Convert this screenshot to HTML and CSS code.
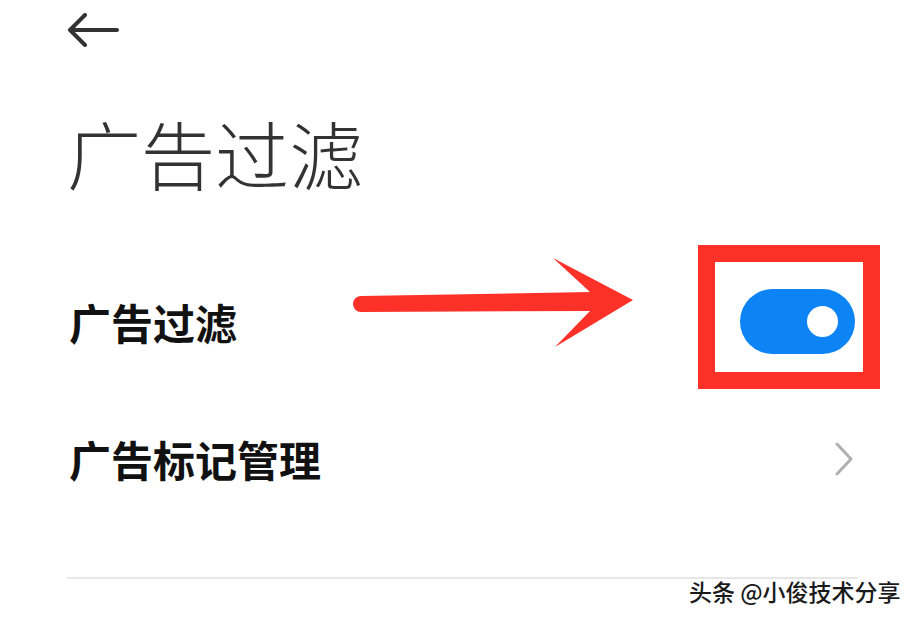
FILE: index.html
```html
<!DOCTYPE html>
<html lang="zh-CN">
<head>
<meta charset="utf-8">
<title>广告过滤</title>
<link rel="stylesheet" href="styles.css">
</head>
<body>
<div class="page">
  <header class="topbar">
    <svg class="back" width="52" height="34" viewBox="0 0 52 34">
      <path d="M18 2 L3 17 L18 32 M3 17 H50" fill="none" stroke="#333" stroke-width="4" stroke-linecap="round" stroke-linejoin="round"/>
    </svg>
  </header>
  <h1 class="title">广告过滤</h1>
  <div class="list">
    <div class="row">
      <span class="label">广告过滤</span>
      <span class="switch"><span class="knob"></span></span>
    </div>
    <div class="row">
      <span class="label">广告标记管理</span>
      <svg class="chev" width="20" height="34" viewBox="0 0 20 34">
        <path d="M3 2 L17 17 L3 32" fill="none" stroke="#b0b0b0" stroke-width="3" stroke-linecap="round" stroke-linejoin="round"/>
      </svg>
    </div>
  </div>
  <div class="divider"></div>

  <svg class="annot-arrow" width="300" height="100" viewBox="0 0 300 100">
    <path d="M21 38 L250 34 L213 0 L293 42 L215 89 L250 53 L21 54 A8 8 0 0 1 21 38 Z" fill="#fe3129"/>
  </svg>
  <div class="annot-box"></div>
  <div class="watermark">头条 @小俊技术分享</div>
</div>
</body>
</html>
```
FILE: styles.css
```css
* { box-sizing: border-box; }
html, body { margin: 0; padding: 0; background: #fff; }
body {
  font-family: "Noto Sans CJK SC", "Noto Sans", sans-serif;
  color: #222;
  width: 923px;
  height: 621px;
  overflow: hidden;
}
.page {
  position: relative;
  width: 923px;
  height: 621px;
  padding-left: 67px;
}
.topbar {
  height: 62px;
  padding-top: 13px;
}
.back { display: block; margin-left: 0; }
.title {
  margin: 53px 0 0 0;
  font-size: 74px;
  line-height: 74px;
  font-weight: 300;
  color: #333;
  letter-spacing: 0;
}
.list {
  margin-top: 64px;
  padding-right: 68px;
}
.row {
  height: 137px;
  display: flex;
  align-items: center;
  justify-content: space-between;
}
.label {
  font-size: 42px;
  font-weight: 700;
  color: #111;
  line-height: 1;
  padding-left: 2px;
}
.switch {
  width: 115px;
  height: 65px;
  border-radius: 33px;
  background: #0d84f6;
  display: flex;
  align-items: center;
  justify-content: flex-end;
  padding-right: 17px;
}
.knob {
  width: 31px;
  height: 31px;
  border-radius: 50%;
  background: #fff;
}
.chev { display: block; margin-right: 1px; }
.divider {
  margin-top: 50px;
  height: 2px;
  width: 790px;
  background: #e6e6e6;
}
.annot-arrow {
  position: absolute;
  left: 340px;
  top: 258px;
}
.annot-box {
  position: absolute;
  left: 698px;
  top: 245px;
  width: 182px;
  height: 144px;
  border: 17px solid #fe3129;
}
.watermark {
  position: absolute;
  left: 689px;
  top: 575px;
  font-size: 23px;
  line-height: 32px;
  font-weight: 500;
  color: #1a1a1a;
  text-shadow: 1px 1px 0 #fff;
  white-space: nowrap;
}
```
